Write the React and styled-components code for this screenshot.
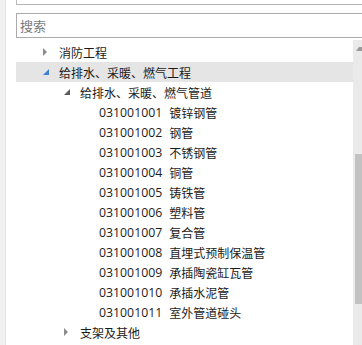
import React from "react";
import styled, { createGlobalStyle } from "styled-components";

const GlobalStyle = createGlobalStyle`
  html, body {
    margin: 0;
    padding: 0;
    background: #ffffff;
    overflow: hidden;
  }
  body {
    font-family: "Open Sans", "Noto Sans CJK SC", sans-serif;
  }
`;

const items = [
  ["031001001", "镀锌钢管"],
  ["031001002", "钢管"],
  ["031001003", "不锈钢管"],
  ["031001004", "铜管"],
  ["031001005", "铸铁管"],
  ["031001006", "塑料管"],
  ["031001007", "复合管"],
  ["031001008", "直埋式预制保温管"],
  ["031001009", "承插陶瓷缸瓦管"],
  ["031001010", "承插水泥管"],
  ["031001011", "室外管道碰头"],
];

const Page = styled.div`
  display: flex;
  height: 345px;
  width: 362px;
  overflow: hidden;
`;

const SideStrip = styled.div`
  width: 5px;
  flex: none;
  background: #f0f0f0;
  border-right: 1px solid #e4e4e4;
`;

const Main = styled.div`
  flex: 1;
  display: flex;
  flex-direction: column;
  padding-left: 10px;
  min-width: 0;
`;

const TopBox = styled.div`
  height: 4px;
  border-left: 1px solid #b9b9b9;
  border-bottom: 1px solid #b4b4b4;
  margin-right: -20px;
`;

const SearchBox = styled.div`
  margin-top: 8px;
  height: 23px;
  border: 1px solid #aaaaaa;
  margin-right: -20px;
  display: flex;
  align-items: center;
  padding-left: 3px;
  font-family: "Noto Sans CJK SC", sans-serif;
  font-size: 13px;
  color: #7b7b7b;
`;

const TreeArea = styled.div`
  display: flex;
  margin-top: 2px;
  flex: 1;
  min-height: 0;
`;

const TreeList = styled.div`
  flex: 1;
  padding-top: 2px;
`;

const Row = styled.div`
  display: flex;
  align-items: center;
  height: 20px;
  padding-left: ${(p) => p.$indent}px;
  background: ${(p) => (p.$selected ? "#e5e5e5" : "transparent")};
  font-size: 12px;
  color: #1b1b1b;
  white-space: nowrap;
`;

const Toggle = styled.span`
  width: 19px;
  flex: none;
  display: flex;
  align-items: center;
  padding-left: 2px;
  box-sizing: border-box;
`;

const Label = styled.span`
  font-family: "Noto Sans CJK SC", sans-serif;
`;

const Code = styled.span`
  font-family: "Open Sans", sans-serif;
  font-size: 12.3px;
  margin-right: 7px;
`;

const Scrollbar = styled.div`
  width: 9px;
  flex: none;
  background: #eaeaea;
  display: flex;
  flex-direction: column;
`;

const ScrollArrow = styled.div`
  height: 17px;
  display: flex;
  align-items: center;
  padding-left: 3px;
`;

const Thumb = styled.div`
  margin-top: 97px;
  margin-left: 2px;
  height: 150px;
  background: #c2c2c2;
`;

const Collapsed = () => (
  <svg width="6" height="8" viewBox="0 0 6 8">
    <polygon points="1,0 5,4 1,8" fill="#8c8c8c" />
  </svg>
);

const Expanded = ({ color }) => (
  <svg width="8" height="8" viewBox="0 0 8 8">
    <polygon points="7,1 7,7 1,7" fill={color} />
  </svg>
);

const TreeRow = ({ indent, state, selected, children }) => (
  <Row $indent={indent} $selected={selected}>
    <Toggle>
      {state === "collapsed" && <Collapsed />}
      {state === "expanded" && (
        <Expanded color={selected ? "#3d80d6" : "#5c5c5c"} />
      )}
    </Toggle>
    {children}
  </Row>
);

export default function App() {
  return (
    <>
      <GlobalStyle />
      <Page>
        <SideStrip />
        <Main>
          <TopBox />
          <SearchBox>搜索</SearchBox>
          <TreeArea>
            <TreeList>
              <TreeRow indent={24} state="collapsed">
                <Label>消防工程</Label>
              </TreeRow>
              <TreeRow indent={24} state="expanded" selected>
                <Label>给排水、采暖、燃气工程</Label>
              </TreeRow>
              <TreeRow indent={45} state="expanded">
                <Label>给排水、采暖、燃气管道</Label>
              </TreeRow>
              {items.map(([code, name]) => (
                <TreeRow key={code} indent={64}>
                  <Code>{code}</Code>
                  <Label>{name}</Label>
                </TreeRow>
              ))}
              <TreeRow indent={45} state="collapsed">
                <Label>支架及其他</Label>
              </TreeRow>
            </TreeList>
            <Scrollbar>
              <ScrollArrow>
                <svg width="6" height="4" viewBox="0 0 6 4">
                  <polygon points="0,4 6,4 6,0 3,0" fill="#9a9a9a" />
                </svg>
              </ScrollArrow>
              <Thumb />
            </Scrollbar>
          </TreeArea>
        </Main>
      </Page>
    </>
  );
}
